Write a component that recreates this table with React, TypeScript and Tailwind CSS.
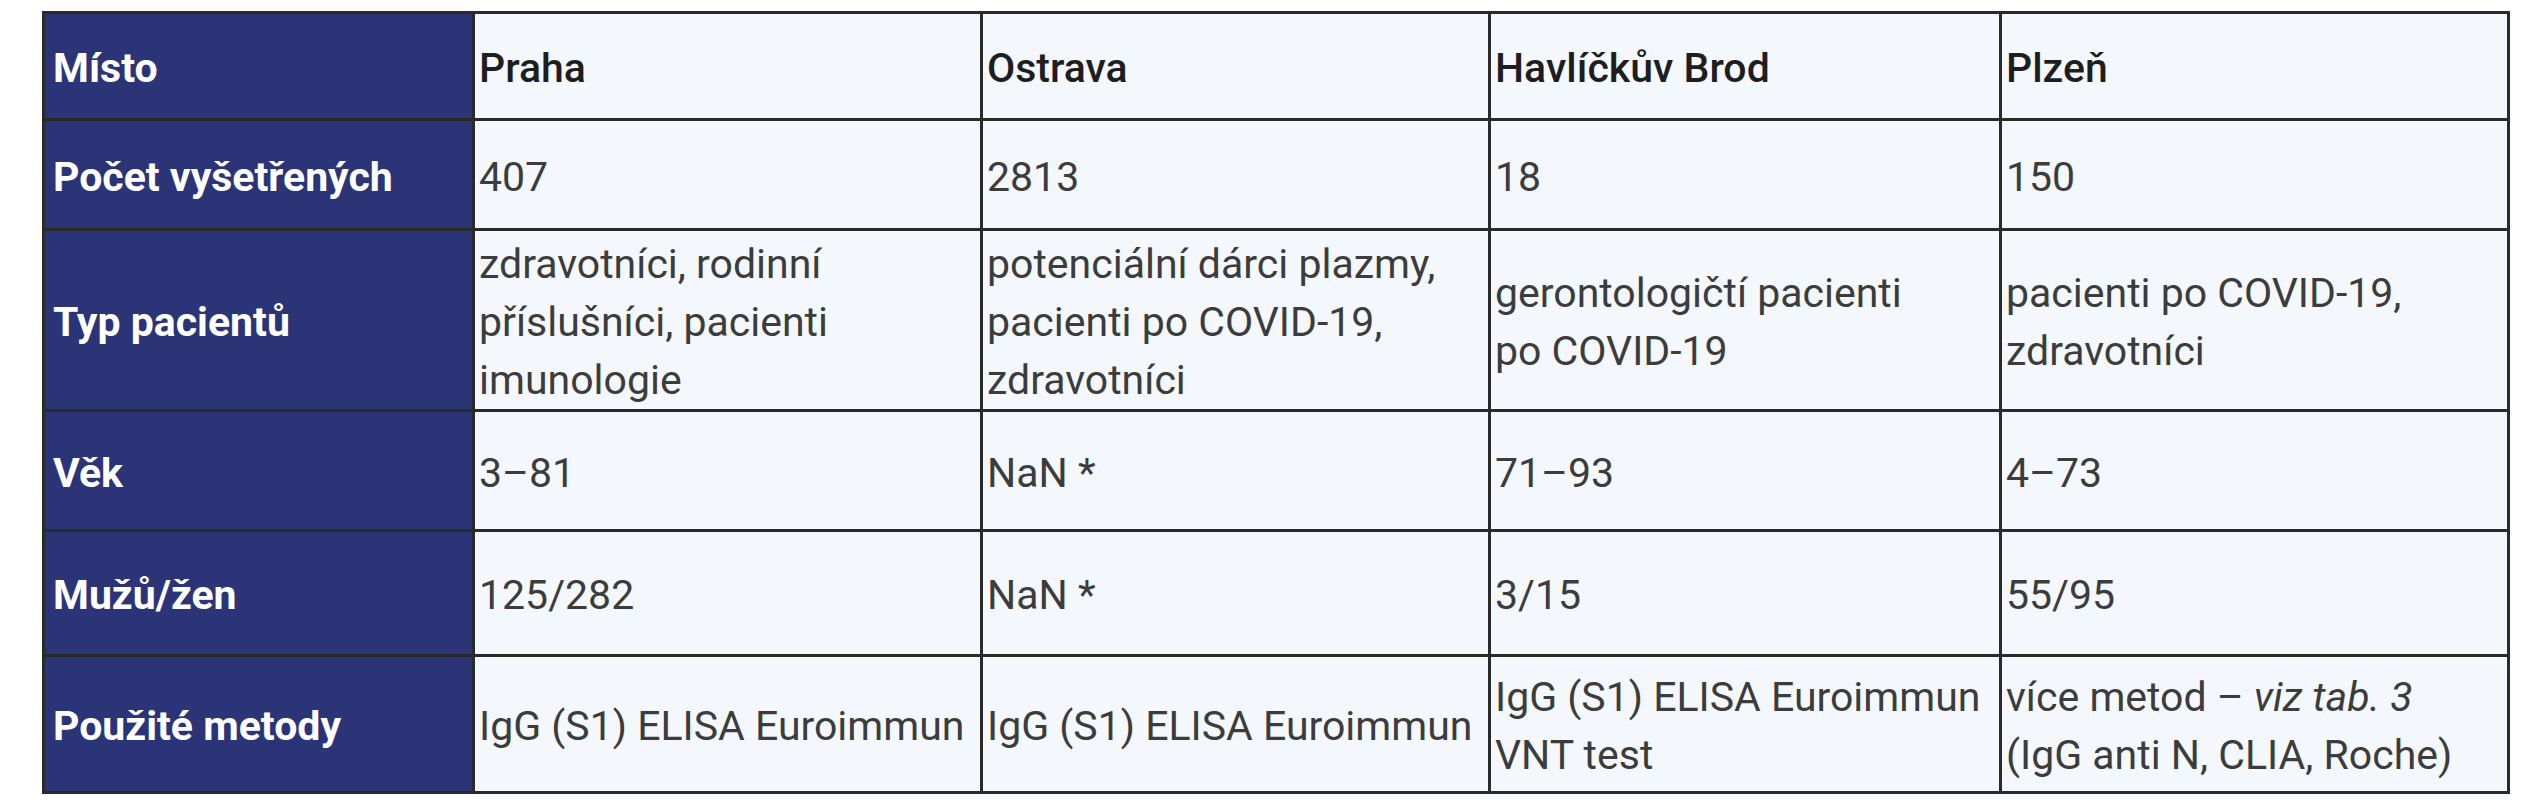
const rows: { label: string; cells: React.ReactNode[]; h: string }[] = [
  {
    label: 'Počet vyšetřených',
    cells: ['407', '2813', '18', '150'],
    h: 'h-[110px]',
  },
  {
    label: 'Typ pacientů',
    cells: [
      <>zdravotníci, rodinní<br />příslušníci, pacienti<br />imunologie</>,
      <>potenciální dárci plazmy,<br />pacienti po COVID-19,<br />zdravotníci</>,
      <>gerontologičtí pacienti<br />po COVID-19</>,
      <>pacienti po COVID-19,<br />zdravotníci</>,
    ],
    h: 'h-[177px]',
  },
  {
    label: 'Věk',
    cells: ['3–81', 'NaN *', '71–93', '4–73'],
    h: 'h-[120px]',
  },
  {
    label: 'Mužů/žen',
    cells: ['125/282', 'NaN *', '3/15', '55/95'],
    h: 'h-[125px]',
  },
  {
    label: 'Použité metody',
    cells: [
      'IgG (S1) ELISA Euroimmun',
      'IgG (S1) ELISA Euroimmun',
      <>IgG (S1) ELISA Euroimmun<br />VNT test</>,
      <>více metod – <i>viz tab. 3</i><br />(IgG anti N, CLIA, Roche)</>,
    ],
    h: 'h-[137px]',
  },
]

const places = ['Praha', 'Ostrava', 'Havlíčkův Brod', 'Plzeň']

export default function App() {
  return (
    <div className="w-[2525px] h-[800px] bg-white pt-[11px] pl-[42px] font-['Roboto',sans-serif]">
      <table className="w-[2465px] table-fixed border-collapse border-[3px] border-[#2a2a2a] text-[41px] leading-[58px]">
        <colgroup>
          <col className="w-[430px]" />
          <col className="w-[508px]" />
          <col className="w-[508px]" />
          <col className="w-[511px]" />
          <col className="w-[508px]" />
        </colgroup>
        <tbody>
          <tr className="h-[107px]">
            <th className="bg-[#2b3476] text-white font-bold text-left align-middle pl-2 pt-1 border-[3px] border-[#2a2a2a]">
              Místo
            </th>
            {places.map(p => (
              <td key={p} className="bg-[#f4f8fc] text-[#1e1e1e] font-medium align-middle pl-1 pt-1 border-[3px] border-[#2a2a2a]">
                {p}
              </td>
            ))}
          </tr>
          {rows.map(r => (
            <tr key={r.label} className={r.h}>
              <th className="bg-[#2b3476] text-white font-bold text-left align-middle pl-2 pt-1 border-[3px] border-[#2a2a2a]">
                {r.label}
              </th>
              {r.cells.map((c, i) => (
                <td key={i} className="bg-[#f4f8fc] text-[#3c3c3c] align-middle pl-1 pt-1 border-[3px] border-[#2a2a2a] whitespace-nowrap">
                  {c}
                </td>
              ))}
            </tr>
          ))}
        </tbody>
      </table>
    </div>
  )
}
